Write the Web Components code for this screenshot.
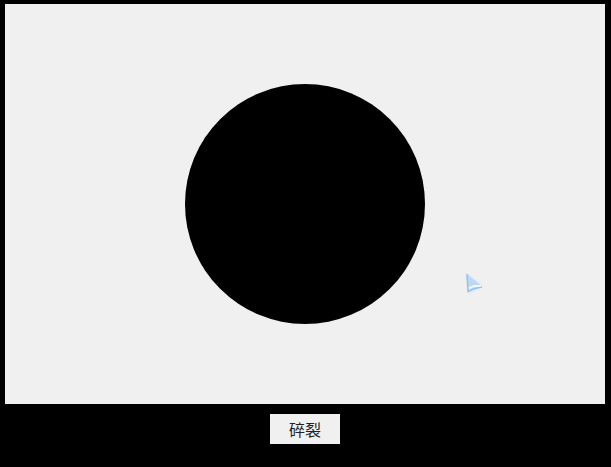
<!DOCTYPE html>
<html lang="zh"><head><meta charset="utf-8">
<style>
html,body{margin:0;padding:0;background:#000;height:100%;overflow:hidden}
</style></head><body>
<shatter-app></shatter-app>
<template id="canvas-t"><style>
:host{display:flex;position:relative;width:600px;height:400px;background:#f0f0f0;align-items:center;justify-content:center}
.circle{width:240px;height:240px;border-radius:50%;background:#000}
svg{position:absolute;left:454px;top:264px;width:26px;height:28px}
</style><div class="circle"></div>
<svg viewBox="0 0 26 28"><defs><filter id="b" x="-30%" y="-30%" width="160%" height="160%"><feGaussianBlur stdDeviation="1.100"/></filter><filter id="s" x="-20%" y="-20%" width="140%" height="140%"><feGaussianBlur stdDeviation="0.350"/></filter></defs>
<path d="M7 5 L24 18 L17 22 L9 26 Z" fill="#d4e8f8" filter="url(#b)"/>
<path d="M8 6 L21.500 17 L15 17 L9.500 19.500 Z" fill="#bcd8f3" filter="url(#s)"/>
<path d="M8 6 L9 23.500 L15.500 20.500 L23 19" fill="none" stroke="#8fc1ec" stroke-width="1.400" filter="url(#s)"/>
<path d="M10 20 L15 18 L22 18" fill="none" stroke="#f8fbfe" stroke-width="1.300" filter="url(#s)"/></svg></template>
<template id="btn-t"><style>
:host{display:flex;width:70px;height:30px;background:#f0f0f0;color:#222;align-items:center;justify-content:center;font:400 16px/1 "Noto Sans CJK SC","Noto Sans CJK JP",sans-serif}
</style><slot></slot></template>
<template id="app-t"><style>
:host{display:flex;flex-direction:column;align-items:center;gap:10px;padding:4px 6px 0 5px;width:600px}
</style><shatter-canvas></shatter-canvas><shatter-button>碎裂</shatter-button></template>
<script>
function def(name,t){customElements.define(name,class extends HTMLElement{constructor(){super();this.attachShadow({mode:'open'}).appendChild(document.getElementById(t).content.cloneNode(true));}});}
def('shatter-canvas','canvas-t');def('shatter-button','btn-t');def('shatter-app','app-t');
</script>
</body></html>
